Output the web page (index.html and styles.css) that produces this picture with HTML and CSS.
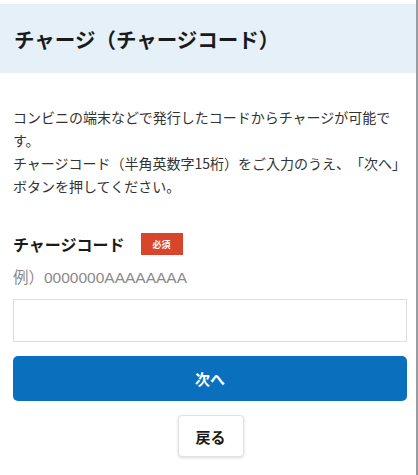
FILE: index.html
```html
<!DOCTYPE html>
<html lang="ja">
<head>
    <meta charset="UTF-8">
    <meta name="viewport" content="width=device-width, initial-scale=1.0">
    <title>チャージ（チャージコード）</title>
    <link rel="stylesheet" href="styles.css">
</head>
<body>
    <div class="page">
        <div class="page-header">
            <h1>チャージ（チャージコード）</h1>
        </div>

        <div class="content">
            <p class="lead">コンビニの端末などで発行したコードからチャージが可能です。<br>チャージコード（半角英数字15桁）をご入力のうえ、「次へ」ボタンを押してください。</p>

            <div class="field-label">
                <label for="charge-code">チャージコード</label>
                <span class="badge">必須</span>
            </div>
            <p class="example">例）0000000AAAAAAAA</p>
            <input type="text" id="charge-code" class="text-input">

            <button class="btn-primary">次へ</button>
            <div class="back-wrap">
                <button class="btn-back">戻る</button>
            </div>
        </div>
    </div>
</body>
</html>
```

FILE: styles.css
```css
body {
    font-family: "Noto Sans CJK JP", "Noto Sans", sans-serif;
    background-color: #fff;
    color: #222;
    margin: 0;
}
.page {
    min-height: 100vh;
    border-right: 2px solid #979da3;
    box-sizing: border-box;
    padding-top: 4px;
}
.page-header {
    background-color: #e5f0f9;
    height: 69px;
    display: flex;
    align-items: center;
    padding-left: 14px;
}
h1 {
    margin: 0;
    font-size: 20.5px;
    font-weight: bold;
    color: #1a1a1a;
}
.content {
    padding: 0 8px 0 13px;
}
.lead {
    margin: 33px 0 0;
    font-size: 14px;
    line-height: 23px;
    color: #333;
    text-spacing-trim: space-all;
}
.field-label {
    display: flex;
    align-items: center;
    gap: 16px;
    margin-top: 35px;
    height: 22px;
}
.field-label label {
    font-size: 16px;
    font-weight: bold;
    color: #1a1a1a;
}
.badge {
    background-color: #d9452a;
    color: #fff;
    font-size: 9px;
    font-weight: bold;
    width: 42px;
    height: 22px;
    display: flex;
    align-items: center;
    justify-content: center;
}
.example {
    margin: 12px 0 0;
    font-family: "Liberation Sans", "Noto Sans CJK JP", sans-serif;
    font-size: 15.5px;
    line-height: 22px;
    color: #8a8a8a;
}
.text-input {
    display: block;
    width: calc(100% - 1px);
    height: 43px;
    margin-top: 10px;
    border: 1px solid #dedede;
    border-radius: 0;
    box-sizing: border-box;
    font-size: 15px;
}
.btn-primary {
    display: block;
    width: calc(100% - 1px);
    height: 45px;
    margin-top: 14px;
    background-color: #0a6fbd;
    color: #fff;
    border: none;
    border-radius: 5px;
    font-family: inherit;
    font-size: 15px;
    font-weight: bold;
    cursor: pointer;
}
.back-wrap {
    display: flex;
    justify-content: center;
    margin-top: 14px;
}
.btn-back {
    width: 66px;
    height: 42px;
    background-color: #fff;
    color: #1a1a1a;
    border: 1px solid #e2e2e2;
    border-radius: 4px;
    box-shadow: 0 1px 3px rgba(0, 0, 0, 0.15);
    font-family: inherit;
    font-size: 15px;
    font-weight: bold;
    cursor: pointer;
}
```
